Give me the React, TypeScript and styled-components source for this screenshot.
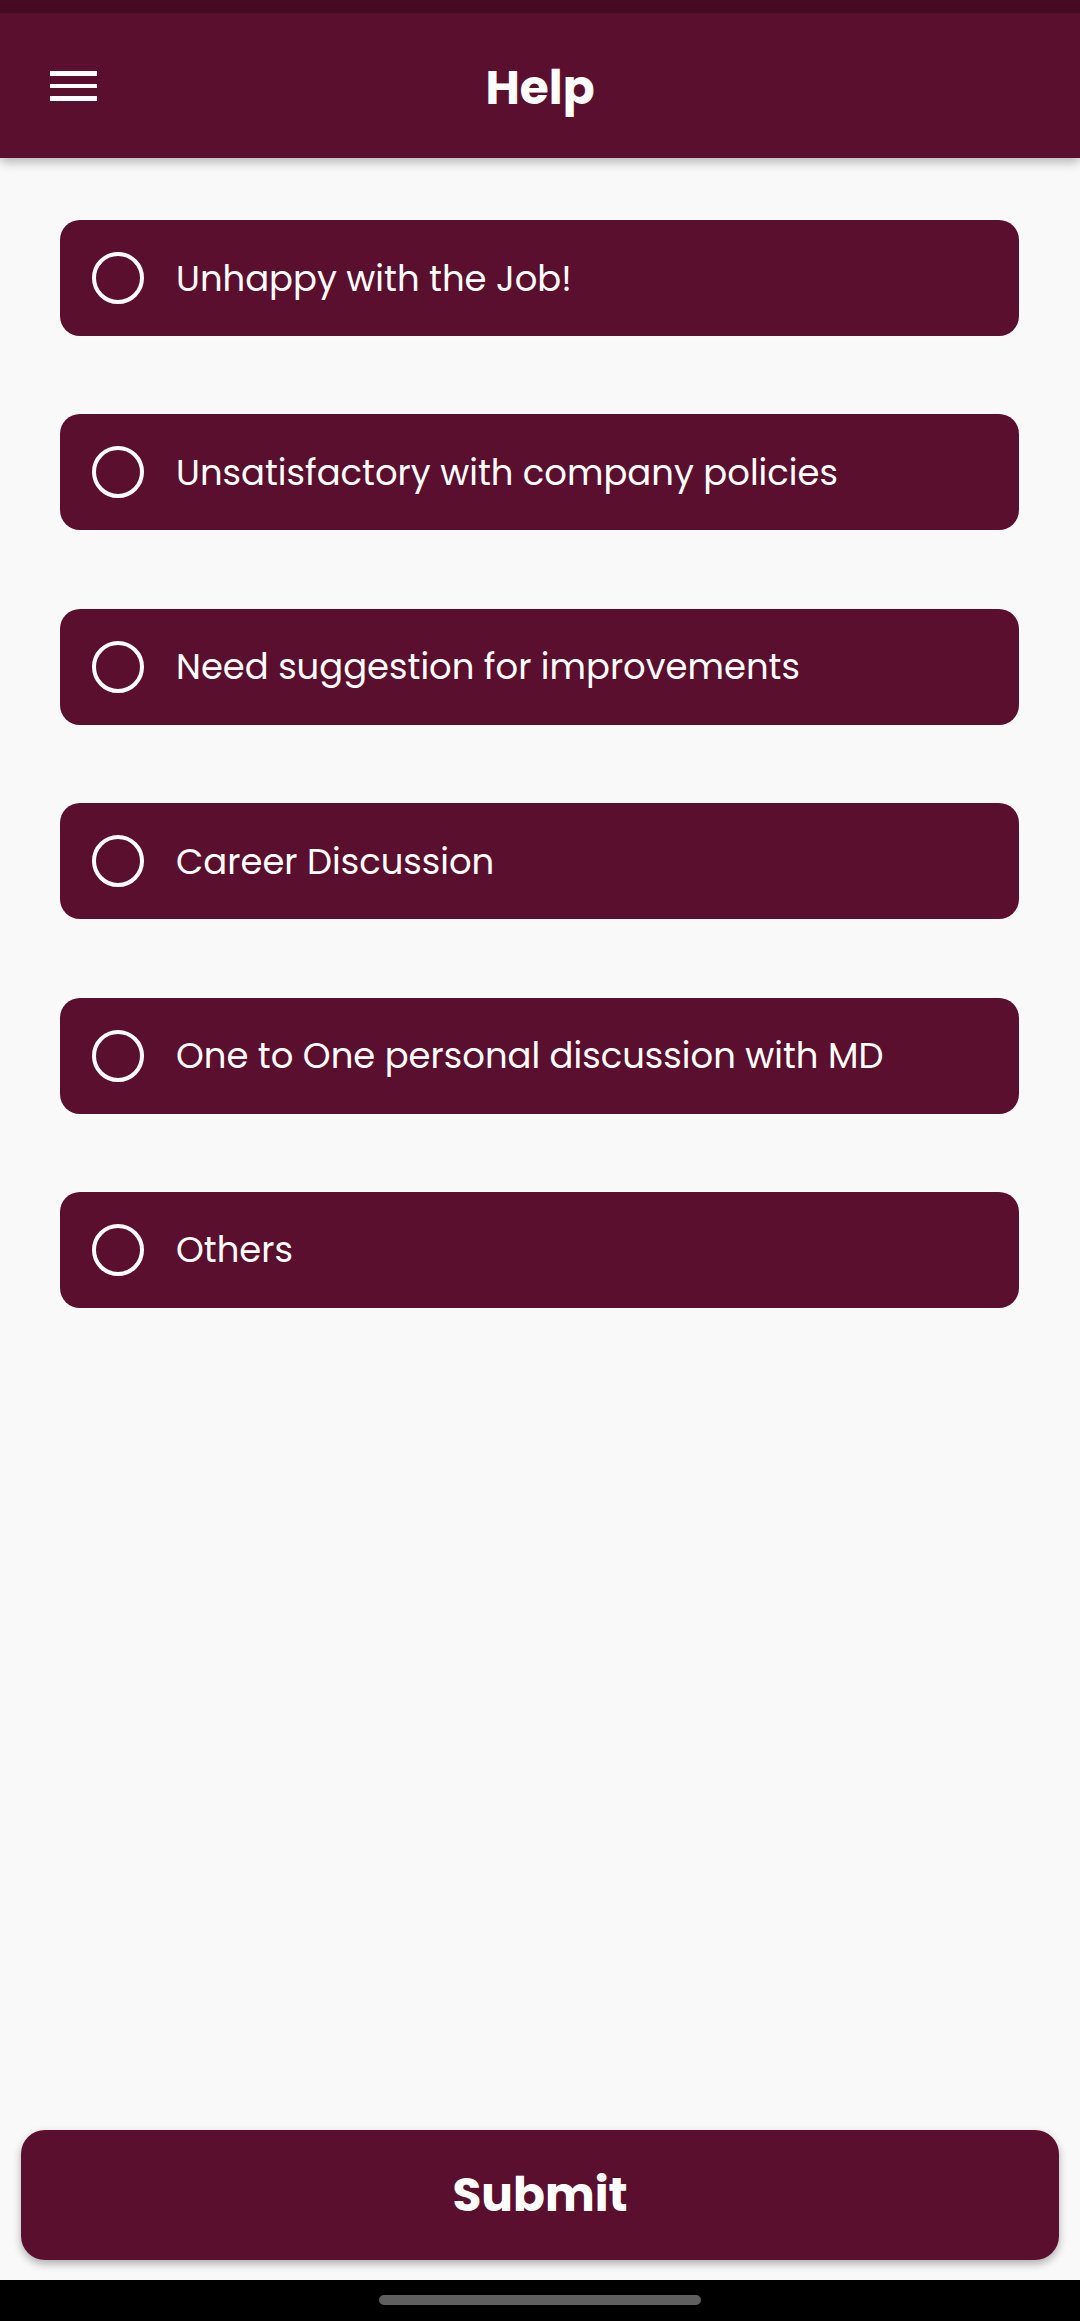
import React from 'react'
import styled, { createGlobalStyle } from 'styled-components'

const GlobalStyle = createGlobalStyle`
  html, body {
    margin: 0;
    padding: 0;
    background: #f9f9f9;
  }
  * { box-sizing: border-box; }
`

const options = [
  'Unhappy with the Job!',
  'Unsatisfactory with company policies',
  'Need suggestion for improvements',
  'Career Discussion',
  'One to One personal discussion with MD',
  'Others',
]

const Help = () => {
  return (
    <Screen>
      <GlobalStyle />
      <StatusBar />
      <AppBar>
        <MenuButton aria-label="menu">
          <MenuLine />
          <MenuLine />
          <MenuLine />
        </MenuButton>
        <Title>Help</Title>
      </AppBar>
      <OptionList>
        {options.map((o) => (
          <OptionCard key={o}>
            <Radio />
            <OptionText>{o}</OptionText>
          </OptionCard>
        ))}
      </OptionList>
      <Footer>
        <SubmitButton>Submit</SubmitButton>
      </Footer>
      <NavBar>
        <NavPill />
      </NavBar>
    </Screen>
  )
}

export default Help

const Screen = styled.div`
  width: 1080px;
  height: 2321px;
  display: flex;
  flex-direction: column;
  background: #f9f9f9;
  font-family: 'Poppins', 'Inter', 'Noto Sans', sans-serif;
  overflow: hidden;
`

const StatusBar = styled.div`
  height: 13px;
  background: #460b22;
  flex-shrink: 0;
`

const AppBar = styled.header`
  position: relative;
  z-index: 1;
  height: 145px;
  flex-shrink: 0;
  background: #5b0f2e;
  display: flex;
  align-items: center;
  justify-content: center;
  box-shadow: 0 4px 10px rgba(0, 0, 0, 0.28);
`

const MenuButton = styled.div`
  position: absolute;
  left: 50px;
  top: 58px;
  width: 47px;
  display: flex;
  flex-direction: column;
  gap: 8px;
`

const MenuLine = styled.span`
  display: block;
  height: 4.5px;
  background: #ffffff;
`

const Title = styled.h1`
  margin: 0;
  color: #ffffff;
  font-family: 'Poppins', 'Inter', sans-serif;
  font-weight: 700;
  font-size: 47px;
  line-height: 1;
  padding-top: 4px;
`

const OptionList = styled.div`
  display: flex;
  flex-direction: column;
  gap: 78.4px;
  padding: 62px 61px 0 60px;
  flex: 1;
`

const OptionCard = styled.div`
  height: 116px;
  background: #5b0f2e;
  border-radius: 20px;
  display: flex;
  align-items: center;
  padding-left: 32px;
  gap: 32px;
`

const Radio = styled.span`
  width: 52px;
  height: 52px;
  border-radius: 50%;
  border: 4.5px solid #ffffff;
  flex-shrink: 0;
`

const OptionText = styled.span`
  color: #ffffff;
  font-size: 35.4px;
  font-weight: 400;
`

const Footer = styled.div`
  padding: 0 21px 20px;
  flex-shrink: 0;
`

const SubmitButton = styled.button`
  width: 100%;
  height: 130px;
  border: none;
  border-radius: 24px;
  background: #5b0f2e;
  color: #ffffff;
  font-family: 'Poppins', 'Inter', sans-serif;
  font-weight: 700;
  font-size: 47px;
  box-shadow: 0 4px 8px rgba(0, 0, 0, 0.3);
`

const NavBar = styled.div`
  height: 41px;
  flex-shrink: 0;
  background: #000000;
  display: flex;
  justify-content: center;
  padding-top: 15px;
`

const NavPill = styled.div`
  width: 322px;
  height: 10px;
  border-radius: 5px;
  background: #5f5f5f;
`
